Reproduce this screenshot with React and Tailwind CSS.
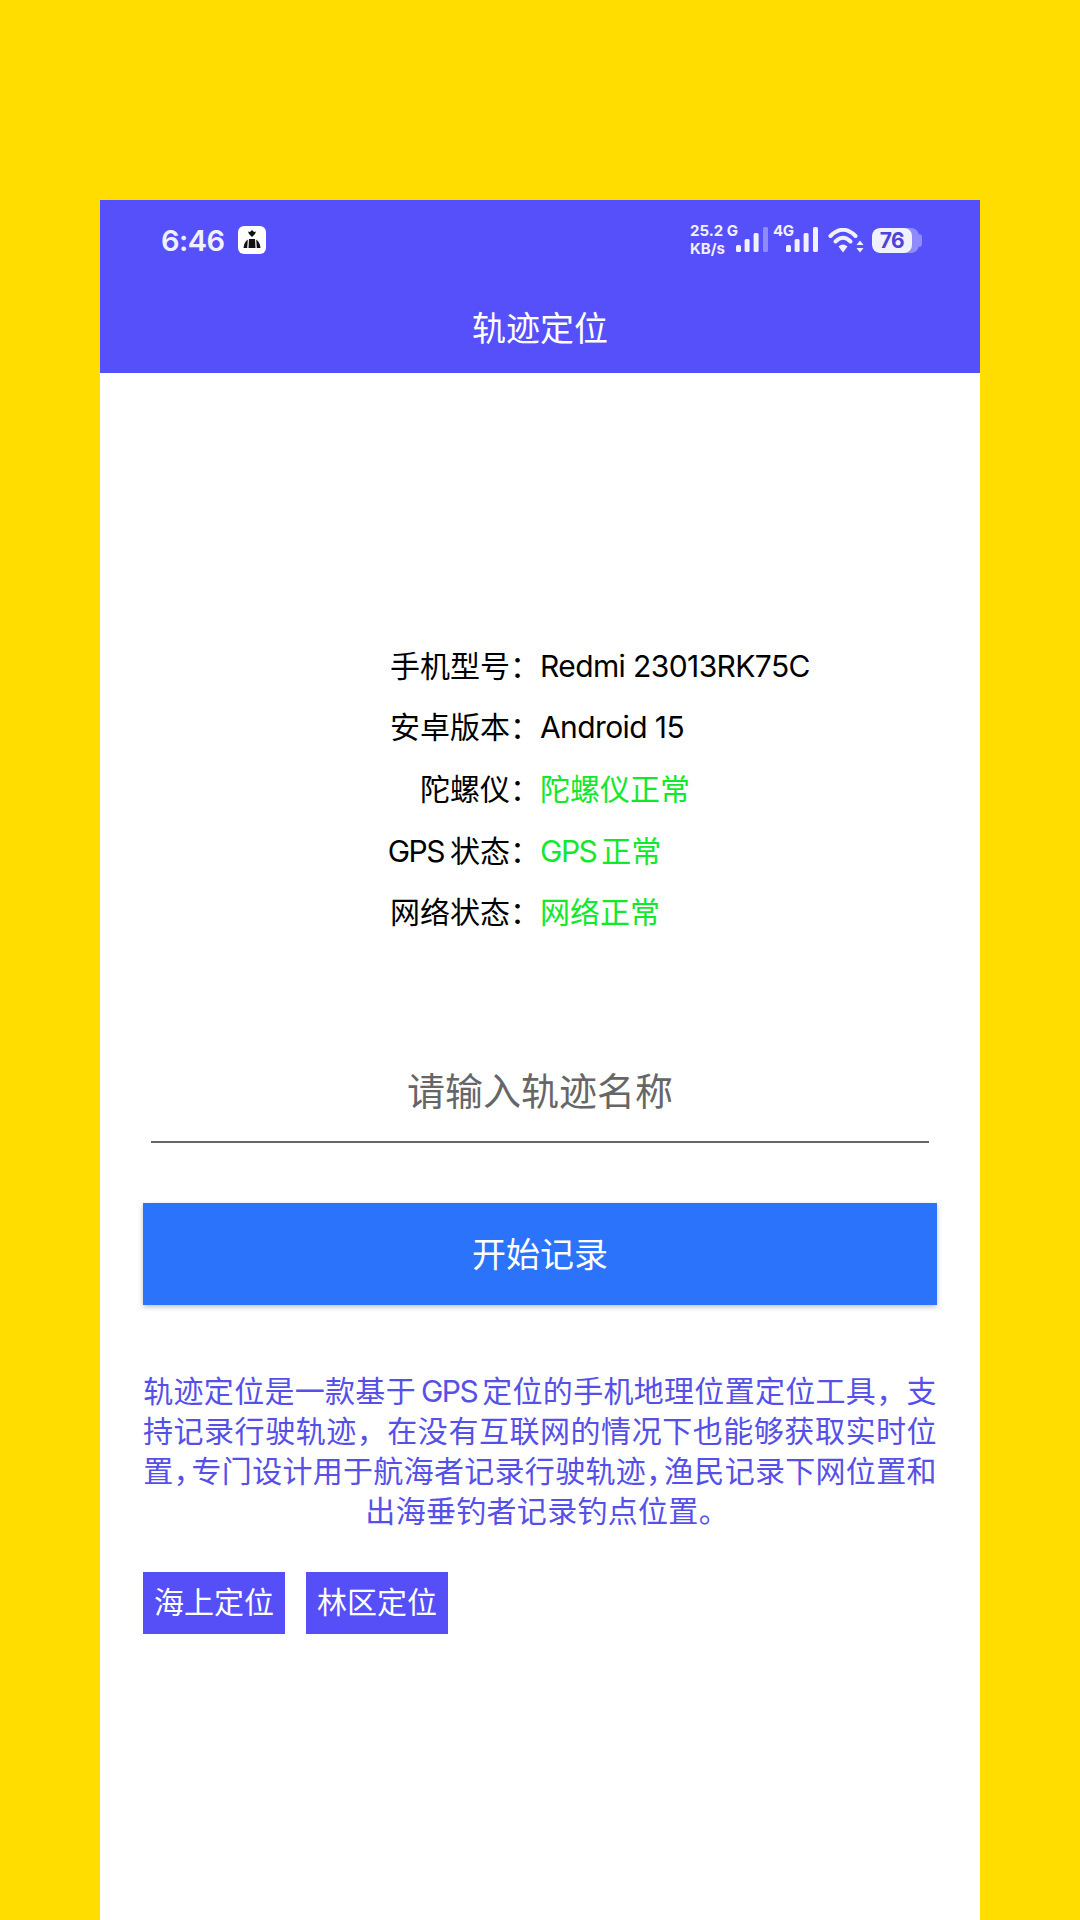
import React from 'react';

const COLON = '\uFF1A';
const COMMA = '\uFF0C';

const Gps = ({ gap = 'mr-[6px]' }) => <span className={`tracking-[-1.5px] ${gap}`}>GPS</span>;

const rows = [
  { label: '手机型号', value: <span className="tracking-[-0.6px]">Redmi 23013RK75C</span> },
  { label: '安卓版本', value: <span className="tracking-[-0.6px]">Android 15</span> },
  { label: '陀螺仪', value: '陀螺仪正常', ok: true },
  { label: <><Gps />状态</>, value: <><Gps gap="mr-[5px]" />正常</>, ok: true },
  { label: '网络状态', value: '网络正常', ok: true },
];

function SignalBars({ dimLast }) {
  return (
    <svg width="32" height="26" viewBox="0 0 32 26" className="block">
      <rect x="0" y="18" width="5" height="7" rx="1.5" fill="#f1f0ff" />
      <rect x="8.6" y="12" width="5" height="13" rx="1.5" fill="#f1f0ff" />
      <rect x="17.6" y="6" width="5" height="19" rx="1.5" fill="#f1f0ff" />
      <rect x="27" y="0" width="5" height="25" rx="1.5" fill={dimLast ? '#8f8bfb' : '#f1f0ff'} />
    </svg>
  );
}

function NotifyIcon() {
  return (
    <div className="w-[28px] h-[28px] rounded-[6px] bg-white flex items-center justify-center">
      <svg width="22" height="22" viewBox="0 0 22 22">
        <path d="M11 1 L13 3 L15 2.5 L14 5 L11 8 L8 5 L7 2.5 L9 3 Z" fill="#111" />
        <path d="M8 10 H14 L14.5 19 H7.5 Z" fill="#111" />
        <path d="M6.8 10.5 L6.2 19 H2.5 Q3 13 6.8 10.5 Z" fill="#111" />
        <path d="M15.2 10.5 L15.8 19 H19.5 Q19 13 15.2 10.5 Z" fill="#111" />
      </svg>
    </div>
  );
}

function WifiIcon() {
  return (
    <svg width="36" height="25" viewBox="0 0 36 25" className="block">
      <path d="M2.5 8 Q15 -4.5 27.5 8" fill="none" stroke="#f1f0ff" strokeWidth="4" strokeLinecap="round" />
      <path d="M7.5 13.5 Q15 6 22.5 13.5" fill="none" stroke="#f1f0ff" strokeWidth="4" strokeLinecap="round" />
      <path d="M10.5 18.5 Q15 14.5 19.5 18.5 L15 24.5 Z" fill="#f1f0ff" />
      <path d="M32 12.5 L35.5 17 H28.5 Z" fill="#f1f0ff" />
      <path d="M32 24.5 L35.5 20 H28.5 Z" fill="#f1f0ff" />
    </svg>
  );
}

function Battery() {
  return (
    <div className="flex items-center">
      <div className="w-[47px] h-[25px] rounded-[8px] bg-[#8f8bfb] overflow-hidden">
        <div className="w-[40px] h-full rounded-[8px] bg-[#f1f0ff] flex items-center justify-center text-[21px] font-bold leading-none tracking-[-0.5px] text-[#4a44d8]">
          76
        </div>
      </div>
      <div className="w-[3px] h-[13px] rounded-r-[3px] bg-[#8f8bfb]" />
    </div>
  );
}

export default function App() {
  return (
    <div className="h-[1920px] bg-[#ffdd00] pt-[200px] px-[100px] overflow-hidden font-['Inter','Noto_Sans_CJK_SC',sans-serif]">
      <div className="h-[1720px] bg-white flex flex-col">
        {/* Header */}
        <header className="h-[173px] bg-[#5650fb] text-white">
          <div className="h-[80px] pl-[61px] pr-[58px] flex items-center justify-between">
            <div className="flex items-center gap-[13px]">
              <span className="text-[29px] font-semibold leading-none tracking-[-0.5px] text-[#f1f0ff]">6:46</span>
              <NotifyIcon />
            </div>
            <div className="flex items-center text-[#f1f0ff]">
              <div className="font-bold text-[15px] leading-[18px] w-[46px] whitespace-nowrap">
                <div>25.2 G</div>
                <div>KB/s</div>
              </div>
              <SignalBars dimLast />
              <div className="relative ml-[18px]">
                <span className="absolute left-[-13px] top-[-4px] font-bold text-[15px] leading-none tracking-[-0.3px]">4G</span>
                <SignalBars />
              </div>
              <div className="ml-[10px]"><WifiIcon /></div>
              <div className="ml-[8px]"><Battery /></div>
            </div>
          </div>
          <h1 className="h-[93px] flex items-center justify-center text-[34px] font-normal pt-[4px]">轨迹定位</h1>
        </header>

        {/* Device info */}
        <div className="pt-[262px] text-[30px] text-black">
          {rows.map((row, i) => (
            <div key={i} className="grid grid-cols-[440px_1fr] h-[61.6px] items-center leading-none">
              <span className="text-right whitespace-nowrap">
                {row.label}{COLON}
              </span>
              <span className={row.ok ? 'text-[#12e82c]' : ''}>{row.value}</span>
            </div>
          ))}
        </div>

        {/* Track name */}
        <div className="mt-[112px] mx-[51px] border-b-2 border-[#666666]">
          <input
            type="text"
            placeholder="请输入轨迹名称"
            className="w-full h-[86px] pb-[14px] text-center text-[38px] bg-transparent outline-none placeholder:text-[#666666]"
          />
        </div>

        <button className="mt-[60px] mx-[43px] h-[102px] pt-[2px] bg-[#2b73fa] text-white text-[34px] shadow-[0_2px_5px_rgba(0,0,0,0.25)]">
          开始记录
        </button>

        <p className="mt-[66px] mx-[43px] text-center text-[30px] leading-[40px] tracking-[0.3px] text-[#5650e8] whitespace-nowrap">
          轨迹定位是一款基于<Gps gap="mx-[5px]" />定位的手机地理位置定位工具{COMMA}支<br />
          <span className="tracking-[0.54px]">持记录行驶轨迹{COMMA}在没有互联网的情况下也能够获取实时位</span><br />
          置<span className="tracking-[-12px]">{COMMA}</span>专门设计用于航海者记录行驶轨迹<span className="tracking-[-12px]">{COMMA}</span>渔民记录下网位置和<br />
          出海垂钓者记录钓点位置<span className="tracking-[-14px]">。</span>
        </p>

        <div className="mt-[41px] mx-[43px] flex gap-[21px]">
          <button className="w-[142px] h-[62px] bg-[#564ff8] text-white text-[30px]">海上定位</button>
          <button className="w-[142px] h-[62px] bg-[#564ff8] text-white text-[30px]">林区定位</button>
        </div>
      </div>
    </div>
  );
}
